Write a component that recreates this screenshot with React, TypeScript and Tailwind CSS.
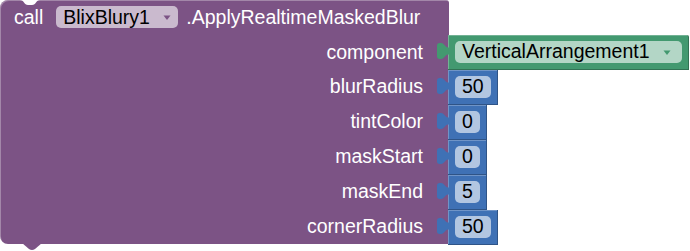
import React from "react";

const PURPLE = "#7c5385";
const GREEN = "#439970";
const BLUE = "#3f71b5";

function Tab({ color }: { color: string }) {
  return (
    <svg className="absolute left-[-11px] top-[8px]" width="12" height="16" viewBox="0 0 12 16">
      <path
        d="M12 4.5 L11 4.5 C8 4.5 7.5 0 4 0 L2.5 0 C1 0 0 1 0 2.5 L0 13.5 C0 15 1 16 2.5 16 L4 16 C7.5 16 8 11.5 11 11.5 L12 11.5 Z"
        fill={color}
      />
    </svg>
  );
}

function Arrow({ color }: { color: string }) {
  return (
    <svg width="8" height="6" viewBox="0 0 8 6" className="ml-[13px] mt-[1px]">
      <path d="M0.5 0.5 L7.5 0.5 L4 5 Z" fill={color} />
    </svg>
  );
}

function NumBlock({ value }: { value: string }) {
  return (
    <div className="relative h-[35px] bg-[#3f71b5] border-b border-r border-black/25 shadow-[inset_1px_1px_0_rgba(255,255,255,0.25)] flex items-start pt-[6px] pl-[7px] pr-[6px]">
      <Tab color={BLUE} />
      <div className="h-[22px] rounded-[5px] bg-white/60 px-[7px] flex items-center text-black leading-none">
        {value}
      </div>
    </div>
  );
}

const labels = ["component", "blurRadius", "tintColor", "maskStart", "maskEnd", "cornerRadius"];
const nums = ["50", "0", "0", "5", "50"];

export default function App() {
  return (
    <div className="relative w-[690px] h-[251px] bg-white overflow-hidden font-['Liberation_Sans',Arial,sans-serif] text-[19.5px]">
      <div className="flex items-start">
        <div className="relative w-[449px] h-[244px] bg-[#7c5385] rounded-tl-[8px] rounded-tr-[3px] rounded-bl-[8px] shadow-[inset_1px_1px_0_rgba(255,255,255,0.3)] flex flex-col">
          <svg className="absolute left-[20px] top-0" width="20" height="5" viewBox="0 0 20 5">
            <path d="M0 0 C4 0 4 5 8 5 L12 5 C16 5 16 0 20 0 Z" fill="#ffffff" />
          </svg>
          <div className="h-[35px] flex items-center pl-[14px] text-white leading-none">
            <span>call</span>
            <div className="ml-[13px] h-[22px] w-[122px] rounded-[5px] bg-white/60 flex items-center pl-[7px] text-black">
              <span>BlixBlury1</span>
              <Arrow color={PURPLE} />
            </div>
            <span className="ml-[8px]">.ApplyRealtimeMaskedBlur</span>
          </div>
          {labels.map((l) => (
            <div key={l} className="h-[35px] flex items-center justify-end pr-[26px] text-white leading-none">
              {l}
            </div>
          ))}
          <svg className="absolute left-[22px] top-[243px]" width="20" height="8" viewBox="0 0 20 8">
            <path d="M0 0 L7 6 Q10 8 13 6 L20 0 Z" fill={PURPLE} />
          </svg>
        </div>
        <div className="-ml-px pt-[35px] flex flex-col items-start">
          <div className="relative h-[35px] w-[241px] bg-[#439970] rounded-tr-[2px] border-b border-r border-black/25 shadow-[inset_1px_1px_0_rgba(255,255,255,0.25)] flex items-start pt-[6px] pl-[7px]">
            <Tab color={GREEN} />
            <div className="h-[22px] w-[227px] rounded-[5px] bg-white/60 flex items-center pl-[7px] text-black leading-none">
              <span>VerticalArrangement1</span>
              <Arrow color={GREEN} />
            </div>
          </div>
          {nums.map((n, i) => (
            <NumBlock key={i} value={n} />
          ))}
        </div>
      </div>
    </div>
  );
}
